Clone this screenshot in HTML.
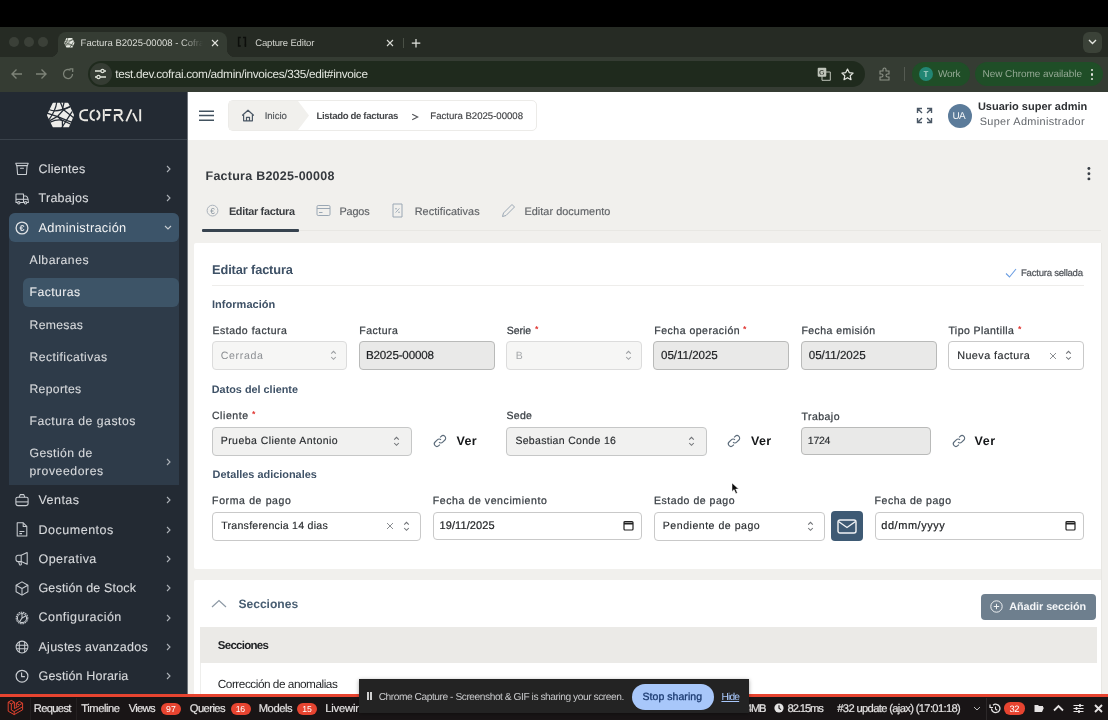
<!DOCTYPE html><html><head><meta charset="utf-8"><style>
*{box-sizing:border-box;margin:0;padding:0}
html,body{width:1108px;height:720px;overflow:hidden;background:#000;font-family:"Liberation Sans",sans-serif;position:relative}
.a{position:absolute}
.t{position:absolute;white-space:nowrap;line-height:1;text-rendering:geometricPrecision}
</style></head><body><div id="root" style="position:absolute;left:0;top:0;width:1108px;height:720px;will-change:transform"><div class="a" style="left:0px;top:0px;width:1108px;height:27px;background:#000"></div>
<div class="a" style="left:0px;top:27px;width:1108px;height:30px;background:#262b24"></div>
<div class="a" style="left:9px;top:37px;width:10px;height:10px;border-radius:50%;background:#3b4038"></div>
<div class="a" style="left:23.5px;top:37px;width:10px;height:10px;border-radius:50%;background:#3b4038"></div>
<div class="a" style="left:38px;top:37px;width:10px;height:10px;border-radius:50%;background:#3b4038"></div>
<div class="a" style="left:58px;top:32px;width:169px;height:25px;background:#353c33;border-radius:8px 8px 0 0"></div>
<div class="a" style="left:50px;top:49px;width:8px;height:8px;background:radial-gradient(circle at 0 0,#262b24 8px,#353c33 8.5px)"></div>
<div class="a" style="left:227px;top:49px;width:8px;height:8px;background:radial-gradient(circle at 100% 0,#262b24 8px,#353c33 8.5px)"></div>
<div class="a" style="left:0px;top:57px;width:1108px;height:35px;background:#353c33"></div>
<svg class="a" style="left:62.5px;top:36.5px" width="13" height="11.5" viewBox="0 0 816 720"><path d="M222 68H568Q580 68 586 80L716 345Q722 360 716 375L604 642Q598 655 584 655H226Q212 655 206 642L76 375Q70 360 76 345L206 80Q212 68 222 68Z" fill="#e8ebe4"/><g fill="none" stroke="#4a5246" stroke-width="45"><path d="M305 60Q280 250 120 470"/><path d="M130 235Q300 310 620 160"/><path d="M140 495L330 390L470 235L610 175"/><path d="M70 315L330 400L560 495L700 545"/><path d="M670 285L430 660"/><path d="M150 530Q320 455 450 490L620 570"/></g></svg>
<div class="t " style="left:80.60px;top:39.00px;font-size:9.50px;color:#dadcd6;width:122px;overflow:hidden;-webkit-mask-image:linear-gradient(90deg,#000 82%,transparent 100%)">Factura B2025-00008 - Cofrai</div>
<svg class="a" style="left:210px;top:38px;" width="10" height="10" viewBox="0 0 10 10"><path d="M2 2L8 8M8 2L2 8" stroke="#e3e5df" stroke-width="1.1"/></svg>
<svg class="a" style="left:237px;top:36px;" width="11" height="12" viewBox="0 0 11 12"><path d="M3.8 1.5H1.6V10H3.8M6 1.5H8.4V9.5" stroke="#0c0e0b" stroke-width="1.5" fill="none"/><path d="M8.4 8.5V11" stroke="#0c0e0b" stroke-width="1.5"/></svg>
<div class="t " style="left:255.30px;top:39.00px;font-size:9.50px;color:#d2d4ce;letter-spacing:-0.165px;">Capture Editor</div>
<svg class="a" style="left:385px;top:38px;" width="10" height="10" viewBox="0 0 10 10"><path d="M2 2L8 8M8 2L2 8" stroke="#d9dbd5" stroke-width="1.1"/></svg>
<div class="a" style="left:403px;top:38px;width:1px;height:10px;background:#4a5046"></div>
<svg class="a" style="left:410px;top:37px;" width="12" height="12" viewBox="0 0 12 12"><path d="M6 2v8.5M1.8 6.2h8.5" stroke="#e3e5df" stroke-width="1.2"/></svg>
<div class="a" style="left:1083px;top:32px;width:19px;height:21px;background:#3b4238;border-radius:6px"></div>
<svg class="a" style="left:1088px;top:39px;" width="9" height="6" viewBox="0 0 9 6"><path d="M1 1l3.5 3.5L8 1" stroke="#e3e5df" stroke-width="1.4" fill="none"/></svg>
<svg class="a" style="left:10px;top:68px;" width="13" height="12" viewBox="0 0 13 12"><path d="M12 6H2M6.5 1.5L2 6l4.5 4.5" stroke="#7d8378" stroke-width="1.4" fill="none"/></svg>
<svg class="a" style="left:35px;top:68px;" width="13" height="12" viewBox="0 0 13 12"><path d="M1 6h10M6.5 1.5L11 6l-4.5 4.5" stroke="#7d8378" stroke-width="1.4" fill="none"/></svg>
<svg class="a" style="left:62px;top:68px;" width="12" height="12" viewBox="0 0 12 12"><path d="M10.5 6A4.5 4.5 0 1 1 8.5 2.3" stroke="#7d8378" stroke-width="1.3" fill="none"/><path d="M7.5 0.8h3.2v3.2" stroke="#7d8378" stroke-width="1.3" fill="none"/></svg>
<div class="a" style="left:88px;top:61px;width:777px;height:26px;background:#1f2a1d;border-radius:13px"></div>
<div class="a" style="left:90px;top:63px;width:22px;height:22px;background:#353c33;border-radius:50%"></div>
<svg class="a" style="left:94px;top:68px;" width="13" height="12" viewBox="0 0 13 12"><path d="M1 3h6M10 3h2M1 9h2M6 9h6" stroke="#dfe3da" stroke-width="1.3"/><circle cx="8.5" cy="3" r="1.6" stroke="#dfe3da" stroke-width="1.2" fill="none"/><circle cx="4.5" cy="9" r="1.6" stroke="#dfe3da" stroke-width="1.2" fill="none"/></svg>
<div class="t " style="left:115.30px;top:69.00px;font-size:11.80px;color:#e2e5de;letter-spacing:-0.305px;">test.dev.cofrai.com/admin/invoices/335/edit#invoice</div>
<svg class="a" style="left:817px;top:67px;" width="14" height="14" viewBox="0 0 14 14"><rect x="0.7" y="0.7" width="8.6" height="9" rx="1" fill="#bfc4ba"/><text x="2" y="8" font-size="7" font-family="Liberation Sans" font-weight="bold" fill="#353c33">G</text><path d="M5 5h8.3v8.3H5z" fill="none" stroke="#bfc4ba" stroke-width="1"/></svg>
<svg class="a" style="left:841px;top:68px;" width="13" height="13" viewBox="0 0 13 13"><path d="M6.5 1l1.7 3.6 3.9.5-2.9 2.7.8 3.9-3.5-2-3.5 2 .8-3.9L.9 5.1l3.9-.5z" fill="none" stroke="#e3e5df" stroke-width="1.2" stroke-linejoin="round"/></svg>
<svg class="a" style="left:878px;top:67px;" width="14" height="14" viewBox="0 0 14 14"><path d="M2 4h3V2.5a1.5 1.5 0 0 1 3 0V4h3v3h-1.5a1.5 1.5 0 0 0 0 3H11v3H2v-3h1.5a1.5 1.5 0 0 0 0-3H2z" fill="none" stroke="#8d9388" stroke-width="1.1"/></svg>
<div class="a" style="left:904px;top:67px;width:1px;height:14px;background:#555b52"></div>
<div class="a" style="left:912px;top:62px;width:58px;height:24px;background:#1f4e27;border-radius:12px"></div>
<div class="a" style="left:919px;top:67px;width:14px;height:14px;background:#228674;border-radius:50%"></div>
<div class="t " style="left:923.50px;top:71.00px;font-size:8.00px;color:#e6f0ea;">T</div>
<div class="t " style="left:938.00px;top:70.00px;font-size:10.00px;color:#93a893;letter-spacing:-0.224px;">Work</div>
<div class="a" style="left:975px;top:62px;width:128px;height:24px;background:#1f4e27;border-radius:12px"></div>
<div class="t " style="left:982.50px;top:70.00px;font-size:10.00px;color:#93a893;letter-spacing:-0.058px;">New Chrome available</div>
<div class="a" style="left:1090.5px;top:68.5px;width:2.6px;height:2.6px;background:#e3e5df;border-radius:50%"></div>
<div class="a" style="left:1090.5px;top:73px;width:2.6px;height:2.6px;background:#e3e5df;border-radius:50%"></div>
<div class="a" style="left:1090.5px;top:77.5px;width:2.6px;height:2.6px;background:#e3e5df;border-radius:50%"></div>
<div class="a" style="left:0px;top:92px;width:187px;height:602px;background:#232a33"></div>
<div class="a" style="left:187px;top:92px;width:1px;height:602px;background:#6f747a"></div>
<div class="a" style="left:0px;top:139px;width:187px;height:1px;background:#3a424b"></div>
<svg class="a" style="left:44px;top:100px" width="34" height="30" viewBox="0 0 816 720"><path d="M222 68H568Q580 68 586 80L716 345Q722 360 716 375L604 642Q598 655 584 655H226Q212 655 206 642L76 375Q70 360 76 345L206 80Q212 68 222 68Z" fill="#eeedea"/><g fill="none" stroke="#232a33" stroke-width="30" stroke-linecap="round"><path d="M305 60Q280 250 120 470"/><path d="M130 235Q300 310 620 160"/><path d="M395 60L465 230"/><path d="M480 60L445 215"/><path d="M140 495L330 390L470 235L610 175"/><path d="M70 315L330 400L560 495L700 545"/><path d="M470 235L720 430"/><path d="M670 285L430 660"/><path d="M150 530Q320 455 450 490L620 570"/><path d="M330 400L440 500L445 660"/></g></svg>
<svg class="a" style="left:76px;top:105px;" width="70" height="20" viewBox="0 0 70 20"><g fill="none" stroke="#eae8e3" stroke-width="1.9"><path d="M12 5.1H8.5A5.1 5.1 0 0 0 8.5 15.2H12"/><path d="M18.8 5.1A5.1 5.1 0 0 0 18.8 15.2"/><path d="M20.6 5.6A5 5 0 0 1 20.6 14.7"/><path d="M27.8 4.2v12.1M29 5h6.4M29 10h5.2"/><path d="M38.8 9.5v6.8M37.9 5h5.3a2.5 2.5 0 0 1 0 5h-3.4M42.8 10.2l4.2 6.1"/><path d="M50.3 16.3L55.6 4.3M57 8.2L61 16.3"/><path d="M64.2 4.2v12.1"/></g></svg>
<div class="t " style="left:38.50px;top:163.00px;font-size:12.50px;color:#d7d9dc;letter-spacing:0.221px;-webkit-text-stroke:0.12px #d7d9dc;">Clientes</div>
<div class="t " style="left:38.50px;top:192.00px;font-size:12.50px;color:#d7d9dc;letter-spacing:0.275px;-webkit-text-stroke:0.12px #d7d9dc;">Trabajos</div>
<div class="a" style="left:9px;top:213px;width:170px;height:272.4px;background:#2e3b49;border-radius:6px 6px 0 0"></div>
<div class="a" style="left:9px;top:213px;width:170px;height:29px;background:#3c5469;border-radius:6px"></div>
<div class="t " style="left:38.50px;top:222.00px;font-size:12.80px;color:#f2f3f4;letter-spacing:0.291px;">Administración</div>
<div class="a" style="left:23px;top:278px;width:156px;height:29px;background:#3d5467;border-radius:6px"></div>
<div class="t " style="left:29.50px;top:254.00px;font-size:12.20px;color:#d7d9dc;letter-spacing:0.518px;-webkit-text-stroke:0.12px #d7d9dc;">Albaranes</div>
<div class="t " style="left:29.50px;top:286.00px;font-size:12.20px;color:#f0f1f2;letter-spacing:0.462px;-webkit-text-stroke:0.12px #d7d9dc;">Facturas</div>
<div class="t " style="left:29.50px;top:319.00px;font-size:12.20px;color:#d7d9dc;letter-spacing:0.326px;-webkit-text-stroke:0.12px #d7d9dc;">Remesas</div>
<div class="t " style="left:29.50px;top:351.00px;font-size:12.20px;color:#d7d9dc;letter-spacing:0.439px;-webkit-text-stroke:0.12px #d7d9dc;">Rectificativas</div>
<div class="t " style="left:29.50px;top:383.00px;font-size:12.20px;color:#d7d9dc;letter-spacing:0.312px;-webkit-text-stroke:0.12px #d7d9dc;">Reportes</div>
<div class="t " style="left:29.50px;top:415.00px;font-size:12.20px;color:#d7d9dc;letter-spacing:0.514px;-webkit-text-stroke:0.12px #d7d9dc;">Factura de gastos</div>
<div class="t " style="left:29.50px;top:447.00px;font-size:12.20px;color:#d7d9dc;letter-spacing:0.420px;-webkit-text-stroke:0.12px #d7d9dc;">Gestión de</div>
<div class="t " style="left:29.50px;top:465.00px;font-size:12.20px;color:#d7d9dc;letter-spacing:0.596px;-webkit-text-stroke:0.12px #d7d9dc;">proveedores</div>
<div class="t " style="left:38.50px;top:494.00px;font-size:12.50px;color:#d7d9dc;letter-spacing:0.456px;-webkit-text-stroke:0.12px #d7d9dc;">Ventas</div>
<div class="t " style="left:38.50px;top:524.00px;font-size:12.50px;color:#d7d9dc;letter-spacing:0.514px;-webkit-text-stroke:0.12px #d7d9dc;">Documentos</div>
<div class="t " style="left:38.50px;top:553.00px;font-size:12.50px;color:#d7d9dc;letter-spacing:0.452px;-webkit-text-stroke:0.12px #d7d9dc;">Operativa</div>
<div class="t " style="left:38.50px;top:582.00px;font-size:12.50px;color:#d7d9dc;letter-spacing:0.152px;-webkit-text-stroke:0.12px #d7d9dc;">Gestión de Stock</div>
<div class="t " style="left:38.50px;top:611.00px;font-size:12.50px;color:#d7d9dc;letter-spacing:0.473px;-webkit-text-stroke:0.12px #d7d9dc;">Configuración</div>
<div class="t " style="left:38.50px;top:641.00px;font-size:12.50px;color:#d7d9dc;letter-spacing:0.267px;-webkit-text-stroke:0.12px #d7d9dc;">Ajustes avanzados</div>
<div class="t " style="left:38.50px;top:670.00px;font-size:12.50px;color:#d7d9dc;letter-spacing:0.162px;-webkit-text-stroke:0.12px #d7d9dc;">Gestión Horaria</div>
<svg class="a" style="left:166px;top:164.5px;" width="5" height="8" viewBox="0 0 5 8"><path d="M1 1l3 3-3 3" stroke="#aeb3b9" stroke-width="1.1" fill="none"/></svg>
<svg class="a" style="left:166px;top:194px;" width="5" height="8" viewBox="0 0 5 8"><path d="M1 1l3 3-3 3" stroke="#aeb3b9" stroke-width="1.1" fill="none"/></svg>
<svg class="a" style="left:166px;top:458.4px;" width="5" height="8" viewBox="0 0 5 8"><path d="M1 1l3 3-3 3" stroke="#aeb3b9" stroke-width="1.1" fill="none"/></svg>
<svg class="a" style="left:166px;top:496px;" width="5" height="8" viewBox="0 0 5 8"><path d="M1 1l3 3-3 3" stroke="#aeb3b9" stroke-width="1.1" fill="none"/></svg>
<svg class="a" style="left:166px;top:525.5px;" width="5" height="8" viewBox="0 0 5 8"><path d="M1 1l3 3-3 3" stroke="#aeb3b9" stroke-width="1.1" fill="none"/></svg>
<svg class="a" style="left:166px;top:555px;" width="5" height="8" viewBox="0 0 5 8"><path d="M1 1l3 3-3 3" stroke="#aeb3b9" stroke-width="1.1" fill="none"/></svg>
<svg class="a" style="left:166px;top:584px;" width="5" height="8" viewBox="0 0 5 8"><path d="M1 1l3 3-3 3" stroke="#aeb3b9" stroke-width="1.1" fill="none"/></svg>
<svg class="a" style="left:166px;top:613.5px;" width="5" height="8" viewBox="0 0 5 8"><path d="M1 1l3 3-3 3" stroke="#aeb3b9" stroke-width="1.1" fill="none"/></svg>
<svg class="a" style="left:166px;top:643px;" width="5" height="8" viewBox="0 0 5 8"><path d="M1 1l3 3-3 3" stroke="#aeb3b9" stroke-width="1.1" fill="none"/></svg>
<svg class="a" style="left:166px;top:672px;" width="5" height="8" viewBox="0 0 5 8"><path d="M1 1l3 3-3 3" stroke="#aeb3b9" stroke-width="1.1" fill="none"/></svg>
<svg class="a" style="left:164px;top:225px;" width="8" height="5" viewBox="0 0 8 5"><path d="M1 1l3 3 3-3" stroke="#c9ced3" stroke-width="1.1" fill="none"/></svg>
<svg class="a" style="left:15px;top:162px;" width="14" height="14" viewBox="0 0 14 14"><g fill="none" stroke="#c9cdd2" stroke-width="1.05" stroke-linejoin="round"><path d="M0.8 1.3h12.4l-0.8 2.3H1.6z"/><path d="M1.9 3.6l0.7 8.9h8.8l0.7-8.9"/><path d="M5.5 6.3h3" stroke-linecap="round"/></g></svg>
<svg class="a" style="left:15px;top:193px;" width="14" height="12" viewBox="0 0 14 12"><g fill="none" stroke="#c9cdd2" stroke-width="1.05" stroke-linejoin="round"><path d="M1 1h7.5v8.5H1z"/><path d="M8.5 3h2.3c1.3 0 2.4 3 2.6 6.5H8.5"/><path d="M1 6.3h12.3"/><circle cx="3.8" cy="9.8" r="1.2" fill="#232a33"/><circle cx="10.6" cy="9.8" r="1.2" fill="#232a33"/></g></svg>
<svg class="a" style="left:15px;top:493px;" width="14" height="14" viewBox="0 0 14 14"><g fill="none" stroke="#c9cdd2" stroke-width="1.05" stroke-linejoin="round"><path d="M2.5 4.2h9a1.6 1.6 0 0 1 1.6 1.6v4.8a2 2 0 0 1-2 2H2.9a2 2 0 0 1-2-2V5.8a1.6 1.6 0 0 1 1.6-1.6z"/><path d="M4.2 4.2l1-2.6h3.6l1 2.6"/><path d="M0.9 8.9h12.2"/></g></svg>
<svg class="a" style="left:16px;top:522px;" width="12" height="15" viewBox="0 0 12 15"><g fill="none" stroke="#c9cdd2" stroke-width="1.05" stroke-linejoin="round"><path d="M1.2 0.8h6l3.6 3.6v9.6H1.2z"/><path d="M7.2 0.8v3.6h3.6"/><path d="M3.4 9.5h5M3.4 11.6h2.6"/></g></svg>
<svg class="a" style="left:15px;top:552px;" width="14" height="14" viewBox="0 0 14 14"><g fill="none" stroke="#c9cdd2" stroke-width="1.05" stroke-linejoin="round"><path d="M1 5.2a2 2 0 0 1 2-2h3.2l6-2.6v11.6l-6-2.6H3a2 2 0 0 1-2-2z"/><path d="M6.2 3.2v6.4"/><path d="M3.6 9.6l0.9 2.9a1 1 0 0 0 1.9-0.5l-0.4-2.4"/></g></svg>
<svg class="a" style="left:15px;top:581px;" width="14" height="15" viewBox="0 0 14 15"><g fill="none" stroke="#c9cdd2" stroke-width="1.05" stroke-linejoin="round"><path d="M7 0.9l5.9 3.3v6.6L7 14.1 1.1 10.8V4.2z"/><path d="M1.1 4.2L7 7.5l5.9-3.3M7 7.5v6.6"/></g></svg>
<svg class="a" style="left:15px;top:611px;" width="14" height="14" viewBox="0 0 14 14"><g fill="none" stroke="#c9cdd2" stroke-width="1.05"><circle cx="7" cy="7" r="5.8" stroke-dasharray="1.6 0.7"/><circle cx="7" cy="7" r="4.6"/><path d="M7 7V2.4M7 7l4-2.3M7 7l-2.5 3.9"/></g></svg>
<svg class="a" style="left:15px;top:640px;" width="14" height="14" viewBox="0 0 14 14"><g fill="none" stroke="#c9cdd2" stroke-width="1.05"><circle cx="7" cy="7" r="5.9"/><path d="M4.3 2.1v9.8M9.7 2.1v9.8M1.3 5.2h11.4M1.3 8.8h11.4"/></g></svg>
<svg class="a" style="left:15px;top:220.5px;" width="14" height="14" viewBox="0 0 14 14"><circle cx="7" cy="7" r="5.9" fill="none" stroke="#dfe2e5" stroke-width="1.3"/><text x="6.9" y="10.1" text-anchor="middle" font-size="9" font-weight="bold" font-family="Liberation Sans" fill="#dfe2e5">€</text></svg>
<svg class="a" style="left:15px;top:669px;" width="14" height="14" viewBox="0 0 14 14"><g fill="none" stroke="#c9cdd2" stroke-width="1.15"><circle cx="7" cy="7.2" r="5.9"/><path d="M6.6 3.6v4h3.3" stroke-linejoin="round"/></g></svg>
<div class="a" style="left:188px;top:92px;width:920px;height:48px;background:#fff"></div>
<svg class="a" style="left:198px;top:109px;" width="17" height="13" viewBox="0 0 17 13"><path d="M1 2.3h15M1 6.5h15M1 11.3h15" stroke="#42525f" stroke-width="1.4"/></svg>
<div class="a" style="left:228px;top:100px;width:309px;height:31px;background:#fff;border:1px solid #ecebe8;border-radius:5px"></div>
<svg class="a" style="left:229px;top:101px" width="80" height="29" viewBox="0 0 80 29"><path d="M0 0H69L80 14.5L69 29H0z" fill="#f1f0ed"/></svg>
<svg class="a" style="left:241px;top:109px;" width="14" height="13" viewBox="0 0 14 13"><path d="M1.2 6.5L7 1.2l5.8 5.3M2.6 5.3v6.5h8.8V5.3M5.5 11.8V8.3h3v3.5" fill="none" stroke="#4a5765" stroke-width="1.2" stroke-linejoin="round"/></svg>
<div class="t " style="left:264.70px;top:112.00px;font-size:9.60px;color:#55585c;letter-spacing:-0.058px;-webkit-text-stroke:0.2px #55585c;">Inicio</div>
<div class="t " style="left:316.50px;top:112.00px;font-size:9.60px;color:#46484b;letter-spacing:-0.343px;font-weight:bold;">Listado de facturas</div>
<svg class="a" style="left:410.5px;top:112.5px;" width="8" height="8" viewBox="0 0 8 8"><path d="M1.2 1.2l5.5 2.8-5.5 2.8" stroke="#505256" stroke-width="1.1" fill="none"/></svg>
<div class="t " style="left:430.30px;top:112.00px;font-size:9.60px;color:#404245;letter-spacing:-0.006px;-webkit-text-stroke:0.15px #404245;">Factura B2025-00008</div>
<svg class="a" style="left:916px;top:107px;" width="17" height="17" viewBox="0 0 17 17"><path d="M1.5 6V1.5H6M1.5 1.5l4.5 4.5M11 1.5h4.5V6M15.5 1.5L11 6M1.5 11v4.5H6M1.5 15.5L6 11M15.5 11v4.5H11M15.5 15.5L11 11" fill="none" stroke="#4a5765" stroke-width="1.4"/></svg>
<div class="a" style="left:947.5px;top:103.7px;width:24px;height:24px;background:#5b7b9a;border-radius:50%"></div>
<div class="t " style="left:952.50px;top:112.00px;font-size:10.00px;color:#f4f6f8;letter-spacing:-0.691px;">UA</div>
<div class="t " style="left:977.90px;top:102.00px;font-size:11.00px;color:#2e3134;letter-spacing:-0.007px;font-weight:bold;">Usuario super admin</div>
<div class="t " style="left:979.70px;top:117.00px;font-size:10.90px;color:#62666b;letter-spacing:0.349px;">Super Administrador</div>
<div class="a" style="left:188px;top:140px;width:920px;height:554px;background:#f1f0ed"></div>
<div class="t " style="left:205.50px;top:170.00px;font-size:12.50px;color:#35393e;letter-spacing:0.251px;font-weight:bold;">Factura B2025-00008</div>
<svg class="a" style="left:1085px;top:165px;" width="8" height="17" viewBox="0 0 8 17"><circle cx="3.9" cy="3.5" r="1.45" fill="#383e45"/><circle cx="3.9" cy="8.8" r="1.45" fill="#383e45"/><circle cx="3.9" cy="13.9" r="1.45" fill="#383e45"/></svg>
<svg class="a" style="left:206px;top:204px;" width="13" height="13" viewBox="0 0 13 13"><circle cx="6.5" cy="6.6" r="5.4" fill="none" stroke="#a3acb5" stroke-width="0.9"/><text x="6.6" y="9.6" text-anchor="middle" font-size="8.3" font-family="Liberation Sans" fill="#8d98a3">€</text></svg>
<div class="t " style="left:228.90px;top:207.00px;font-size:10.90px;color:#3a3d41;letter-spacing:-0.313px;font-weight:bold;">Editar factura</div>
<svg class="a" style="left:316px;top:204px;" width="15" height="13" viewBox="0 0 15 13"><rect x="1" y="1.5" width="13" height="10" rx="1.2" fill="none" stroke="#9aa7b4" stroke-width="1"/><path d="M1 4.5h13M3 8.5h3.5" stroke="#9aa7b4" stroke-width="1"/></svg>
<div class="t " style="left:339.40px;top:207.00px;font-size:10.90px;color:#606367;letter-spacing:-0.155px;-webkit-text-stroke:0.15px #606367;">Pagos</div>
<svg class="a" style="left:392px;top:203px;" width="11" height="15" viewBox="0 0 11 15"><path d="M1 1h9v13H1z" fill="none" stroke="#9aa7b4" stroke-width="1"/><path d="M3.6 9.6l3.8-4.2" stroke="#9aa7b4" stroke-width="0.9"/><circle cx="4" cy="5.8" r="0.8" fill="#9aa7b4"/><circle cx="7" cy="9.2" r="0.8" fill="#9aa7b4"/></svg>
<div class="t " style="left:414.70px;top:207.00px;font-size:10.90px;color:#606367;letter-spacing:0.065px;-webkit-text-stroke:0.15px #606367;">Rectificativas</div>
<svg class="a" style="left:501px;top:203px;" width="14" height="15" viewBox="0 0 14 15"><path d="M1.5 13.5l1-3.5 8.5-8.5 2.5 2.5-8.5 8.5z" fill="none" stroke="#9aa7b4" stroke-width="1"/></svg>
<div class="t " style="left:524.40px;top:207.00px;font-size:10.90px;color:#606367;letter-spacing:0.041px;-webkit-text-stroke:0.15px #606367;">Editar documento</div>
<div class="a" style="left:202px;top:230px;width:899px;height:1px;background:#e8e7e3"></div>
<div class="a" style="left:202px;top:229.4px;width:97px;height:2.2px;background:#37434f;border-radius:1px"></div>
<div class="a" style="left:194px;top:243.4px;width:907px;height:325.9px;background:#fff;border-radius:2px 0 0 2px"></div>
<div class="t " style="left:212.10px;top:264.00px;font-size:12.80px;color:#3e5166;letter-spacing:-0.129px;font-weight:bold;">Editar factura</div>
<svg class="a" style="left:1005px;top:268px;" width="12" height="10" viewBox="0 0 12 10"><path d="M1 5.5l3.5 3.5L11 1" fill="none" stroke="#6d9fe3" stroke-width="1.1"/></svg>
<div class="t " style="left:1021.00px;top:269.00px;font-size:9.60px;color:#4d5157;letter-spacing:-0.257px;-webkit-text-stroke:0.2px #4d5157;">Factura sellada</div>
<div class="a" style="left:212px;top:284.5px;width:872px;height:1px;background:#eeedeb"></div>
<div class="t " style="left:212.00px;top:300.00px;font-size:11.00px;color:#3e5166;letter-spacing:0.035px;font-weight:bold;">Información</div>
<div class="t " style="left:212.40px;top:326.00px;font-size:10.50px;color:#3b4046;letter-spacing:0.523px;-webkit-text-stroke:0.25px #3b4046;">Estado factura</div>
<div class="t " style="left:359.30px;top:326.00px;font-size:10.50px;color:#3b4046;letter-spacing:0.484px;-webkit-text-stroke:0.25px #3b4046;">Factura</div>
<div class="t " style="left:506.80px;top:326.00px;font-size:10.50px;color:#3b4046;letter-spacing:-0.054px;-webkit-text-stroke:0.25px #3b4046;">Serie</div>
<div class="t " style="left:535.00px;top:325.00px;font-size:8.70px;color:#e0332f;font-weight:bold;">*</div>
<div class="t " style="left:654.30px;top:326.00px;font-size:10.50px;color:#3b4046;letter-spacing:0.506px;-webkit-text-stroke:0.25px #3b4046;">Fecha operación</div>
<div class="t " style="left:743.00px;top:325.00px;font-size:8.70px;color:#e0332f;font-weight:bold;">*</div>
<div class="t " style="left:801.50px;top:326.00px;font-size:10.50px;color:#3b4046;letter-spacing:0.435px;-webkit-text-stroke:0.25px #3b4046;">Fecha emisión</div>
<div class="t " style="left:948.40px;top:326.00px;font-size:10.50px;color:#3b4046;letter-spacing:0.444px;-webkit-text-stroke:0.25px #3b4046;">Tipo Plantilla</div>
<div class="t " style="left:1018.00px;top:325.00px;font-size:8.70px;color:#e0332f;font-weight:bold;">*</div>
<div class="a" style="left:212px;top:341px;width:135px;height:29px;background:#f6f6f5;border:1px solid #dcdcdc;border-radius:4px"></div>
<div class="t " style="left:220.70px;top:351.00px;font-size:10.60px;color:#8d9094;letter-spacing:0.670px;">Cerrada</div>
<svg class="a" style="left:329.8px;top:350.2px;" width="7" height="11" viewBox="0 0 7 11"><path d="M1.2 3.6L3.5 1.3 5.8 3.6M1.2 7L3.5 9.3 5.8 7" fill="none" stroke="#9a9da0" stroke-width="1.05"/></svg>
<div class="a" style="left:359px;top:341px;width:136px;height:29px;background:#e9e9e8;border:1px solid #b9bab9;border-radius:4px"></div>
<div class="t " style="left:366.00px;top:350.00px;font-size:11.60px;color:#1e2023;letter-spacing:-0.172px;-webkit-text-stroke:0.2px #1e2023;">B2025-00008</div>
<div class="a" style="left:506px;top:341px;width:136px;height:29px;background:#f6f6f5;border:1px solid #dcdcdc;border-radius:4px"></div>
<div class="t " style="left:515.70px;top:351.00px;font-size:10.50px;color:#a4a7aa;">B</div>
<svg class="a" style="left:624.8px;top:350.2px;" width="7" height="11" viewBox="0 0 7 11"><path d="M1.2 3.6L3.5 1.3 5.8 3.6M1.2 7L3.5 9.3 5.8 7" fill="none" stroke="#9a9da0" stroke-width="1.05"/></svg>
<div class="a" style="left:653px;top:341px;width:136px;height:29px;background:#e9e9e8;border:1px solid #b9bab9;border-radius:4px"></div>
<div class="t " style="left:661.00px;top:350.00px;font-size:11.60px;color:#1e2023;letter-spacing:-0.041px;-webkit-text-stroke:0.2px #1e2023;">05/11/2025</div>
<div class="a" style="left:801px;top:341px;width:136px;height:29px;background:#e9e9e8;border:1px solid #b9bab9;border-radius:4px"></div>
<div class="t " style="left:808.80px;top:350.00px;font-size:11.60px;color:#1e2023;letter-spacing:-0.041px;-webkit-text-stroke:0.2px #1e2023;">05/11/2025</div>
<div class="a" style="left:948px;top:341px;width:136px;height:29px;background:#fff;border:1px solid #c9c9c9;border-radius:4px"></div>
<div class="t " style="left:957.20px;top:351.00px;font-size:10.80px;color:#2a2d30;letter-spacing:0.439px;-webkit-text-stroke:0.15px #2a2d30;">Nueva factura</div>
<svg class="a" style="left:1049px;top:351.5px;" width="8" height="8" viewBox="0 0 8 8"><path d="M1 1l6 6M7 1L1 7" stroke="#8a8d91" stroke-width="1"/></svg>
<svg class="a" style="left:1065.3px;top:350.2px;" width="7" height="11" viewBox="0 0 7 11"><path d="M1.2 3.6L3.5 1.3 5.8 3.6M1.2 7L3.5 9.3 5.8 7" fill="none" stroke="#6f7276" stroke-width="1.05"/></svg>
<div class="t " style="left:211.80px;top:385.00px;font-size:10.80px;color:#3e5166;letter-spacing:0.019px;font-weight:bold;">Datos del cliente</div>
<div class="t " style="left:211.90px;top:411.00px;font-size:10.50px;color:#3b4046;letter-spacing:0.585px;-webkit-text-stroke:0.25px #3b4046;">Cliente</div>
<div class="t " style="left:252.00px;top:410.00px;font-size:8.70px;color:#e0332f;font-weight:bold;">*</div>
<div class="t " style="left:506.60px;top:411.00px;font-size:10.50px;color:#3b4046;letter-spacing:0.228px;-webkit-text-stroke:0.25px #3b4046;">Sede</div>
<div class="t " style="left:801.50px;top:412.00px;font-size:10.50px;color:#3b4046;letter-spacing:0.464px;-webkit-text-stroke:0.25px #3b4046;">Trabajo</div>
<div class="a" style="left:212px;top:426.5px;width:199.5px;height:29px;background:#f1f1f0;border:1px solid #c6c7c7;border-radius:4px"></div>
<div class="t " style="left:220.70px;top:436.00px;font-size:10.50px;color:#2a2d30;letter-spacing:0.457px;-webkit-text-stroke:0.15px #2a2d30;">Prueba Cliente Antonio</div>
<svg class="a" style="left:393.3px;top:436.2px;" width="7" height="11" viewBox="0 0 7 11"><path d="M1.2 3.6L3.5 1.3 5.8 3.6M1.2 7L3.5 9.3 5.8 7" fill="none" stroke="#6f7276" stroke-width="1.05"/></svg>
<svg class="a" style="left:432.5px;top:434px;" width="14" height="14" viewBox="0 0 14 14"><path d="M6 8.2a2.6 2.6 0 0 0 3.7 0l2.2-2.2a2.6 2.6 0 0 0-3.7-3.7L7.1 3.4M8 5.8a2.6 2.6 0 0 0-3.7 0L2.1 8a2.6 2.6 0 0 0 3.7 3.7l1.1-1.1" fill="none" stroke="#5b6b7a" stroke-width="1.1"/></svg>
<div class="t " style="left:456.40px;top:435.00px;font-size:12.50px;color:#16181a;letter-spacing:0.366px;font-weight:bold;">Ver</div>
<div class="a" style="left:506px;top:426.5px;width:200.5px;height:29px;background:#f1f1f0;border:1px solid #c6c7c7;border-radius:4px"></div>
<div class="t " style="left:515.40px;top:436.00px;font-size:10.50px;color:#2a2d30;letter-spacing:0.314px;-webkit-text-stroke:0.15px #2a2d30;">Sebastian Conde 16</div>
<svg class="a" style="left:688.3px;top:436.2px;" width="7" height="11" viewBox="0 0 7 11"><path d="M1.2 3.6L3.5 1.3 5.8 3.6M1.2 7L3.5 9.3 5.8 7" fill="none" stroke="#6f7276" stroke-width="1.05"/></svg>
<svg class="a" style="left:727px;top:434px;" width="14" height="14" viewBox="0 0 14 14"><path d="M6 8.2a2.6 2.6 0 0 0 3.7 0l2.2-2.2a2.6 2.6 0 0 0-3.7-3.7L7.1 3.4M8 5.8a2.6 2.6 0 0 0-3.7 0L2.1 8a2.6 2.6 0 0 0 3.7 3.7l1.1-1.1" fill="none" stroke="#5b6b7a" stroke-width="1.1"/></svg>
<div class="t " style="left:751.00px;top:435.00px;font-size:12.50px;color:#16181a;letter-spacing:0.366px;font-weight:bold;">Ver</div>
<div class="a" style="left:801px;top:427px;width:129.5px;height:28px;background:#e9e9e8;border:1px solid #b9bab9;border-radius:4px"></div>
<div class="t " style="left:807.80px;top:436.00px;font-size:10.50px;color:#2a2d30;letter-spacing:-0.253px;-webkit-text-stroke:0.15px #2a2d30;">1724</div>
<svg class="a" style="left:951.5px;top:434px;" width="14" height="14" viewBox="0 0 14 14"><path d="M6 8.2a2.6 2.6 0 0 0 3.7 0l2.2-2.2a2.6 2.6 0 0 0-3.7-3.7L7.1 3.4M8 5.8a2.6 2.6 0 0 0-3.7 0L2.1 8a2.6 2.6 0 0 0 3.7 3.7l1.1-1.1" fill="none" stroke="#5b6b7a" stroke-width="1.1"/></svg>
<div class="t " style="left:974.50px;top:435.00px;font-size:12.50px;color:#16181a;letter-spacing:0.516px;font-weight:bold;">Ver</div>
<div class="t " style="left:212.60px;top:470.00px;font-size:10.90px;color:#3e5166;letter-spacing:0.007px;font-weight:bold;">Detalles adicionales</div>
<div class="t " style="left:212.10px;top:496.00px;font-size:10.50px;color:#3b4046;letter-spacing:0.633px;-webkit-text-stroke:0.25px #3b4046;">Forma de pago</div>
<div class="t " style="left:432.80px;top:496.00px;font-size:10.50px;color:#3b4046;letter-spacing:0.594px;-webkit-text-stroke:0.25px #3b4046;">Fecha de vencimiento</div>
<div class="t " style="left:654.00px;top:496.00px;font-size:10.50px;color:#3b4046;letter-spacing:0.541px;-webkit-text-stroke:0.25px #3b4046;">Estado de pago</div>
<div class="t " style="left:874.60px;top:496.00px;font-size:10.50px;color:#3b4046;letter-spacing:0.536px;-webkit-text-stroke:0.25px #3b4046;">Fecha de pago</div>
<div class="a" style="left:212px;top:511.5px;width:209px;height:29px;background:#fff;border:1px solid #c9c9c9;border-radius:4px"></div>
<div class="t " style="left:221.20px;top:521.00px;font-size:10.60px;color:#2a2d30;letter-spacing:0.256px;-webkit-text-stroke:0.15px #2a2d30;">Transferencia 14 dias</div>
<svg class="a" style="left:386px;top:522px;" width="8" height="8" viewBox="0 0 8 8"><path d="M1 1l6 6M7 1L1 7" stroke="#8a8d91" stroke-width="1"/></svg>
<svg class="a" style="left:402.8px;top:520.7px;" width="7" height="11" viewBox="0 0 7 11"><path d="M1.2 3.6L3.5 1.3 5.8 3.6M1.2 7L3.5 9.3 5.8 7" fill="none" stroke="#6f7276" stroke-width="1.05"/></svg>
<div class="a" style="left:432.5px;top:511.5px;width:209.5px;height:28.5px;background:#fff;border:1px solid #c9c9c9;border-radius:4px"></div>
<div class="t " style="left:439.50px;top:521.00px;font-size:11.00px;color:#1e2023;letter-spacing:0.085px;-webkit-text-stroke:0.2px #1e2023;">19/11/2025</div>
<svg class="a" style="left:623px;top:520px;" width="11" height="11" viewBox="0 0 11 11"><rect x="1" y="1.5" width="9" height="8.5" rx="1" fill="none" stroke="#222" stroke-width="1.2"/><path d="M1 3.5h9" stroke="#222" stroke-width="2"/></svg>
<div class="a" style="left:654px;top:511.5px;width:170.5px;height:29px;background:#fff;border:1px solid #c9c9c9;border-radius:4px"></div>
<div class="t " style="left:662.80px;top:521.00px;font-size:10.60px;color:#2a2d30;letter-spacing:0.497px;-webkit-text-stroke:0.15px #2a2d30;">Pendiente de pago</div>
<svg class="a" style="left:806.8px;top:520.7px;" width="7" height="11" viewBox="0 0 7 11"><path d="M1.2 3.6L3.5 1.3 5.8 3.6M1.2 7L3.5 9.3 5.8 7" fill="none" stroke="#6f7276" stroke-width="1.05"/></svg>
<div class="a" style="left:830.8px;top:511px;width:32px;height:29.5px;background:#3e5a74;border-radius:4px"></div>
<svg class="a" style="left:837px;top:519px;" width="20" height="15" viewBox="0 0 20 15"><rect x="1" y="1" width="18" height="13" rx="2" fill="none" stroke="#f2f4f6" stroke-width="1.4"/><path d="M1.5 2.5L10 8.5l8.5-6" fill="none" stroke="#f2f4f6" stroke-width="1.4"/></svg>
<div class="a" style="left:874.5px;top:511.5px;width:209.5px;height:28.5px;background:#fff;border:1px solid #c9c9c9;border-radius:4px"></div>
<div class="t " style="left:881.30px;top:521.00px;font-size:11.00px;color:#1e2023;letter-spacing:0.536px;-webkit-text-stroke:0.2px #1e2023;">dd/mm/yyyy</div>
<svg class="a" style="left:1065px;top:520px;" width="11" height="11" viewBox="0 0 11 11"><rect x="1" y="1.5" width="9" height="8.5" rx="1" fill="none" stroke="#222" stroke-width="1.2"/><path d="M1 3.5h9" stroke="#222" stroke-width="2"/></svg>
<svg class="a" style="left:730.5px;top:482px;" width="10" height="14" viewBox="0 0 10 14"><path d="M1 1V9.6L3.1 7.6L4.8 11.6L6.4 10.9L4.7 7.1H7.6Z" fill="#0a0a0a" stroke="#fff" stroke-width="0.5" stroke-linejoin="round"/></svg>
<div class="a" style="left:194px;top:579.6px;width:907px;height:114.4px;background:#fff;border-radius:2px 0 0 0"></div>
<svg class="a" style="left:211px;top:599px;" width="16" height="9" viewBox="0 0 16 9"><path d="M1 8L8 1.5 15 8" fill="none" stroke="#8d99a5" stroke-width="1.2"/></svg>
<div class="t " style="left:238.40px;top:598.00px;font-size:12.10px;color:#4a5f73;letter-spacing:-0.004px;font-weight:bold;">Secciones</div>
<div class="a" style="left:981px;top:593.7px;width:114.5px;height:26px;background:#6e7f8e;border-radius:4px"></div>
<svg class="a" style="left:990px;top:600px;" width="13" height="13" viewBox="0 0 13 13"><circle cx="6.5" cy="6.5" r="5.7" fill="none" stroke="#eef1f3" stroke-width="1"/><path d="M6.5 3.8v5.4M3.8 6.5h5.4" stroke="#eef1f3" stroke-width="1"/></svg>
<div class="t " style="left:1009.30px;top:602.00px;font-size:10.80px;color:#f4f6f8;letter-spacing:-0.047px;font-weight:bold;">Añadir sección</div>
<div class="a" style="left:199.5px;top:626.8px;width:897px;height:36.2px;background:#ebeae7"></div>
<div class="a" style="left:199.5px;top:663px;width:1px;height:31px;background:#eeeeec"></div>
<div class="t " style="left:217.80px;top:641.00px;font-size:11.50px;color:#1f2124;letter-spacing:-0.724px;font-weight:bold;">Secciones</div>
<div class="t " style="left:217.80px;top:679.00px;font-size:11.80px;color:#1f2124;letter-spacing:-0.477px;">Corrección de anomalias</div>
<div class="a" style="left:1101px;top:140px;width:7px;height:554px;background:#f1f0ed"></div>
<div class="a" style="left:1101px;top:243px;width:1px;height:451px;background:#e8e7e3"></div>
<div class="a" style="left:0px;top:694px;width:1108px;height:3px;background:#e74430"></div>
<div class="a" style="left:0px;top:697px;width:1108px;height:23px;background:#191516"></div>
<svg class="a" style="left:0;top:694px" width="30" height="26" viewBox="0 0 30 26"><g fill="none" stroke="#e8432f" stroke-width="0.95" stroke-linejoin="round"><path d="M8.2 8.2L11.3 6.4L14.4 8.2L14.4 14.6L19.4 11.8"/><path d="M8.2 8.2L8.2 17.2L14.2 20.6L22.6 15.8L22.6 9.2"/><path d="M8.2 8.2L11.3 10L14.4 8.2M11.3 10V16L14.2 17.6L22.6 12.8M14.2 17.6V20.6"/><path d="M16.3 9.2L19.4 7.4L22.6 9.2L19.4 11Z M16.3 9.2V12.8"/></g></svg>
<div class="a" style="left:30px;top:698px;width:1px;height:22px;background:#242021"></div>
<div class="a" style="left:76px;top:698px;width:1px;height:22px;background:#242021"></div>
<div class="t " style="left:33.80px;top:704.00px;font-size:11.20px;color:#e2e0e0;letter-spacing:-0.672px;-webkit-text-stroke:0.2px #e2e0e0;">Request</div>
<div class="t " style="left:81.30px;top:704.00px;font-size:11.20px;color:#e2e0e0;letter-spacing:-0.460px;-webkit-text-stroke:0.2px #e2e0e0;">Timeline</div>
<div class="t " style="left:128.80px;top:704.00px;font-size:11.20px;color:#e2e0e0;letter-spacing:-0.722px;-webkit-text-stroke:0.2px #e2e0e0;">Views</div>
<div class="a" style="left:160.6px;top:702.6px;width:20.6px;height:12px;background:#e74430;border-radius:6px"></div>
<div class="t " style="left:165.90px;top:705.00px;font-size:8.70px;color:#fff;letter-spacing:0.313px;">97</div>
<div class="t " style="left:189.80px;top:704.00px;font-size:11.20px;color:#e2e0e0;letter-spacing:-0.572px;-webkit-text-stroke:0.2px #e2e0e0;">Queries</div>
<div class="a" style="left:230.5px;top:702.6px;width:20px;height:12px;background:#e74430;border-radius:6px"></div>
<div class="t " style="left:235.80px;top:705.00px;font-size:8.70px;color:#fff;letter-spacing:-0.287px;">16</div>
<div class="t " style="left:258.70px;top:704.00px;font-size:11.20px;color:#e2e0e0;letter-spacing:-0.422px;-webkit-text-stroke:0.2px #e2e0e0;">Models</div>
<div class="a" style="left:297px;top:702.6px;width:20.2px;height:12px;background:#e74430;border-radius:6px"></div>
<div class="t " style="left:302.30px;top:705.00px;font-size:8.70px;color:#fff;letter-spacing:-0.088px;">15</div>
<div class="t " style="left:325.20px;top:704.00px;font-size:11.20px;color:#e2e0e0;letter-spacing:-0.156px;-webkit-text-stroke:0.2px #e2e0e0;">Livewire</div>
<div class="t " style="left:746.00px;top:704.00px;font-size:11.20px;color:#e2e0e0;letter-spacing:-1.216px;-webkit-text-stroke:0.2px #e2e0e0;">4MB</div>
<svg class="a" style="left:774px;top:703px;" width="10" height="10" viewBox="0 0 10 10"><circle cx="5" cy="5" r="4.6" fill="#e5e3e3"/><path d="M5 2.3V5.3l2 1.3" stroke="#191516" stroke-width="1.1" fill="none"/></svg>
<div class="t " style="left:787.50px;top:704.00px;font-size:11.20px;color:#e2e0e0;letter-spacing:-1.078px;-webkit-text-stroke:0.2px #e2e0e0;">82.15ms</div>
<div class="t " style="left:837.30px;top:704.00px;font-size:11.20px;color:#e2e0e0;letter-spacing:-0.655px;-webkit-text-stroke:0.2px #e2e0e0;">#32 update (ajax) (17:01:18)</div>
<svg class="a" style="left:973px;top:706px;" width="8" height="5" viewBox="0 0 8 5"><path d="M1 1l3 3 3-3" stroke="#bbb" stroke-width="1" fill="none"/></svg>
<div class="a" style="left:986px;top:698px;width:1px;height:22px;background:#2c2829"></div>
<svg class="a" style="left:989px;top:703px;" width="12" height="11" viewBox="0 0 12 11"><path d="M2.5 5.5A4.2 4.2 0 1 0 4 2.2" fill="none" stroke="#e5e3e3" stroke-width="1.3"/><path d="M1 1.5v3h3" fill="none" stroke="#e5e3e3" stroke-width="1.2"/><path d="M6.5 3.5v2.5l1.8 1.3" fill="none" stroke="#e5e3e3" stroke-width="1.1"/></svg>
<div class="a" style="left:1004px;top:702px;width:20.8px;height:12.5px;background:#e74430;border-radius:6.2px"></div>
<div class="t " style="left:1009.40px;top:705.00px;font-size:9.30px;color:#fff;letter-spacing:-0.344px;">32</div>
<svg class="a" style="left:1034px;top:704px;" width="10" height="9" viewBox="0 0 10 9"><path d="M0.5 1h3.5l1 1h4v1.5H2.5L0.5 8z M2.5 3.5H10L8 8H0.5z" fill="#e5e3e3"/></svg>
<svg class="a" style="left:1053px;top:704px;" width="11" height="8" viewBox="0 0 11 8"><path d="M1 6.5l4.5-4.5 4.5 4.5" stroke="#e5e3e3" stroke-width="1.8" fill="none"/></svg>
<svg class="a" style="left:1073px;top:703px;" width="11" height="11" viewBox="0 0 11 11"><path d="M0.5 2.5h10M0.5 5.5h10M0.5 8.5h10" stroke="#e5e3e3" stroke-width="1.1"/><path d="M7 1v3M3.5 4v3M6 7v3" stroke="#e5e3e3" stroke-width="1.6"/></svg>
<svg class="a" style="left:1094px;top:704px;" width="9" height="9" viewBox="0 0 9 9"><path d="M1 1l7 7M8 1L1 8" stroke="#e5e3e3" stroke-width="1.9"/></svg>
<div class="a" style="left:359px;top:679px;width:389.5px;height:34px;background:#232323;box-shadow:0 1px 4px rgba(0,0,0,.35)"></div>
<div class="a" style="left:367px;top:692px;width:1.8px;height:8px;background:#d0d0d0"></div>
<div class="a" style="left:370.2px;top:692px;width:1.8px;height:8px;background:#d0d0d0"></div>
<div class="t " style="left:378.70px;top:693.00px;font-size:10.20px;color:#c7c8ca;letter-spacing:-0.448px;">Chrome Capture - Screenshot &amp; GIF is sharing your screen.</div>
<div class="a" style="left:631.7px;top:683.5px;width:82px;height:26.3px;background:#a8c7fa;border-radius:13px"></div>
<div class="t " style="left:642.50px;top:692.00px;font-size:10.50px;color:#1b3a70;letter-spacing:0.050px;-webkit-text-stroke:0.3px #1b3a70;">Stop sharing</div>
<div class="t " style="left:721.40px;top:693.00px;font-size:10.20px;color:#a8c7fa;letter-spacing:-0.795px;text-decoration:underline">Hide</div></div></body></html>
